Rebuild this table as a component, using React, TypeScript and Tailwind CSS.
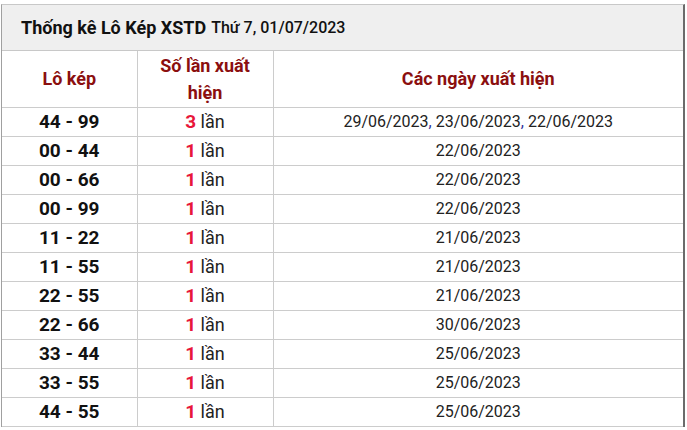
const rows: { pair: string; count: number; dates: string[] }[] = [
  { pair: '44 - 99', count: 3, dates: ['29/06/2023', '23/06/2023', '22/06/2023'] },
  { pair: '00 - 44', count: 1, dates: ['22/06/2023'] },
  { pair: '00 - 66', count: 1, dates: ['22/06/2023'] },
  { pair: '00 - 99', count: 1, dates: ['22/06/2023'] },
  { pair: '11 - 22', count: 1, dates: ['21/06/2023'] },
  { pair: '11 - 55', count: 1, dates: ['21/06/2023'] },
  { pair: '22 - 55', count: 1, dates: ['21/06/2023'] },
  { pair: '22 - 66', count: 1, dates: ['30/06/2023'] },
  { pair: '33 - 44', count: 1, dates: ['25/06/2023'] },
  { pair: '33 - 55', count: 1, dates: ['25/06/2023'] },
  { pair: '44 - 55', count: 1, dates: ['25/06/2023'] },
];

export default function App() {
  return (
    <div className="min-h-screen bg-white pt-[4px] pl-[1px] font-['Roboto',sans-serif]">
      <div className="w-[684px] border-l border-l-[#a0a0a0] border-r-2 border-r-[#6b6b6b] border-t border-t-[#c8c8c8]">
        {/* Title */}
        <div className="h-[46px] bg-[#efefef] border-b border-[#c8c8c8] flex items-center pl-[19px]">
          <span className="text-[18px] font-bold text-[#111]">Thống kê Lô Kép XSTD</span>
          <span className="ml-[5px] text-[16px] font-medium text-[#111]">Thứ 7, 01/07/2023</span>
        </div>

        {/* Table */}
        <table className="w-full border-collapse table-fixed">
          <colgroup>
            <col className="w-[135px]" />
            <col className="w-[136px]" />
            <col />
          </colgroup>
          <thead>
            <tr className="h-[56px] border-b border-[#cccccc]">
              <th className="text-[18px] font-bold text-[#8b0f0f] border-r border-[#cccccc] leading-[27px]">Lô kép</th>
              <th className="text-[18px] font-bold text-[#8b0f0f] border-r border-[#cccccc] leading-[27px] px-[14px]">Số lần xuất hiện</th>
              <th className="text-[18px] font-bold text-[#8b0f0f] leading-[27px]">Các ngày xuất hiện</th>
            </tr>
          </thead>
          <tbody>
            {rows.map((r) => (
              <tr key={r.pair} className="h-[29px] border-b border-[#cccccc] leading-[22px]">
                <td className="text-center text-[19px] font-bold text-[#111] border-r border-[#cccccc] p-0">{r.pair}</td>
                <td className="text-center text-[18px] border-r border-[#cccccc] p-0 text-[#222]">
                  <span className="font-bold text-[19px] text-[#e8173a]">{r.count}</span> lần
                </td>
                <td className="text-center text-[16px] text-[#222] p-0">
                  {r.dates.map((d, i) => (
                    <span key={d}>
                      {i > 0 && <span className="text-[#33339a]">, </span>}
                      {d}
                    </span>
                  ))}
                </td>
              </tr>
            ))}
          </tbody>
        </table>
      </div>
    </div>
  );
}
